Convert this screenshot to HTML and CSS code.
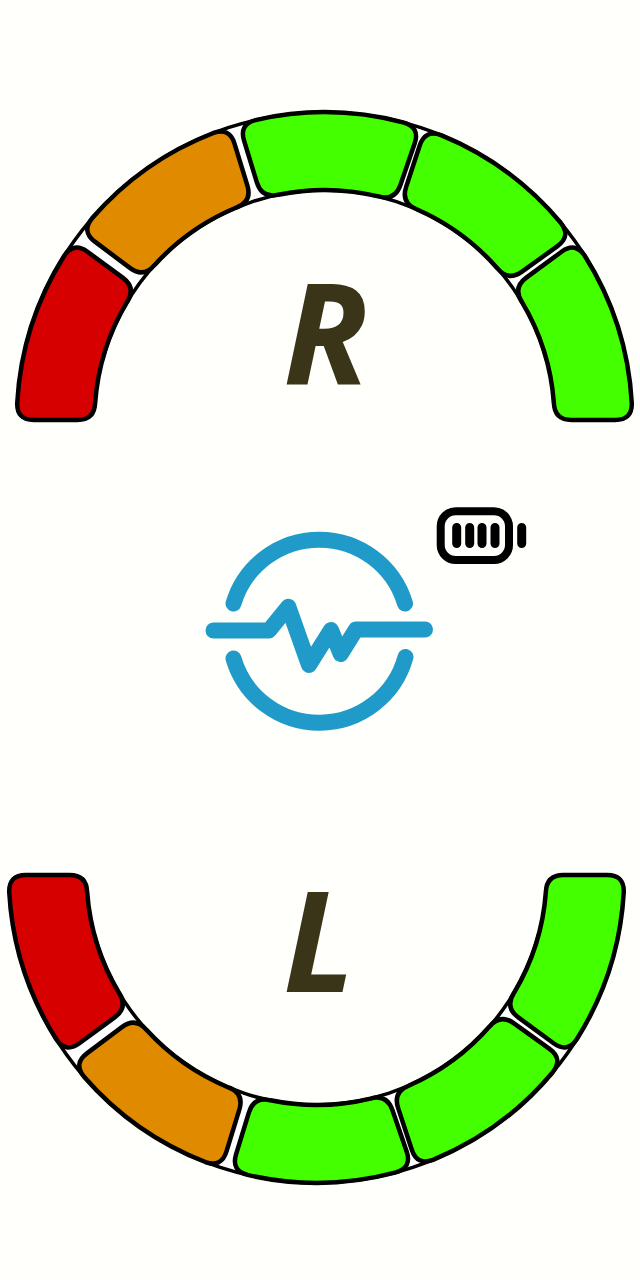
FILE: index.html
```html
<!DOCTYPE html>
<html lang="en">

<head>
    <meta charset="UTF-8">
    <meta name="viewport" content="width=device-width, initial-scale=1.0">
    <title>Insole pressure</title>
    <link rel="stylesheet" href="styles.css">
</head>

<body>
    <!-- Right foot -->
    <svg class="gauge gauge-right" viewBox="0 0 640 320" width="640" height="320">
        <defs>
            <!-- top segment, rotated for its neighbours -->
            <path id="seg-mid" d="M-74.19 -298.67 A307.75 307.75 0 0 1 74.19 -298.67 Q90.57 -294.11 85.32 -277.94 L71.79 -236.34 Q66.54 -220.17 50.09 -224.48 A230 230 0 0 0 -50.09 -224.48 Q-66.54 -220.17 -71.79 -236.34 L-85.32 -277.94 Q-90.57 -294.11 -74.19 -298.67 Z" />
            <!-- left end segment, flipped for the right end -->
            <path id="seg-end" d="M-290.75 0 Q-307.75 0 -307.28 -16.99 A307.75 307.75 0 0 1 -260.25 -164.26 Q-250.79 -178.33 -237.09 -168.27 L-201.83 -142.36 Q-188.13 -132.3 -197.39 -118.06 A230 230 0 0 0 -229.37 -16.98 Q-230 0 -247 0 Z" />
            <g id="gauge" class="segments">
                <path class="track" d="M-297.27 -79.65 A307.75 307.75 0 0 1 297.27 -79.65 L222.16 -59.53 A230 230 0 0 0 -222.16 -59.53 Z" />
                <use href="#seg-end" class="red" />
                <use href="#seg-mid" class="orange" transform="rotate(-35.1)" />
                <use href="#seg-mid" class="green" transform="rotate(1)" />
                <use href="#seg-mid" class="green" transform="rotate(36.2)" />
                <use href="#seg-end" class="green" transform="scale(-1 1)" />
            </g>
        </defs>
        <use href="#gauge" transform="translate(324.5 315)" />
        <text class="foot" x="283" y="279">R</text>
    </svg>

    <div class="status">
        <svg class="logo" viewBox="200 528 236 210" width="236" height="210">
            <path d="M233.5 603.5 A89.5 89.5 0 0 1 405 603.5" />
            <path d="M233.5 658.5 A89.4 89.4 0 0 0 405.5 657" />
            <path d="M213.5 630.5 H269 L288.3 606.7 L309 665 L331 630 L340.7 654 L356 629.5 H425" />
        </svg>
        <svg class="battery" viewBox="436 506 92 60" width="92" height="60">
            <rect class="battery-body" x="440.7" y="511.3" width="68.3" height="48.7" rx="15" />
            <path class="battery-bars" d="M456.7 527.5 V543.5 M469.7 527.5 V543.5 M482 527.5 V543.5 M495 527.5 V543.5 M521.7 527.5 V543.5" />
        </svg>
    </div>

    <!-- Left foot -->
    <svg class="gauge gauge-left" viewBox="0 0 640 350" width="640" height="350">
        <use href="#gauge" transform="translate(316.5 35) scale(1 -1)" />
        <text class="foot" x="283" y="152">L</text>
    </svg>
</body>

</html>
```

FILE: styles.css
```css
body {
    margin: 0;
    padding-top: 105px;
    background-color: #fffffb;
}

.gauge {
    display: block;
}

.gauge-left {
    margin-top: 102px;
}

.segments {
    stroke: #000;
    stroke-width: 4.5;
}

.track {
    fill: #fff;
    stroke-width: 3.5;
}

.red {
    fill: #d60000;
}

.orange {
    fill: #e08a00;
}

.green {
    fill: #44ff00;
}

.foot {
    fill: #3a3418;
    font-family: "Open Sans", sans-serif;
    font-size: 140px;
    font-style: italic;
    font-weight: 700;
}

.status {
    display: flex;
    align-items: flex-start;
    margin-top: 81px;
    padding-left: 200px;
}

.logo {
    margin-top: 22px;
    fill: none;
    stroke: #1f9ac9;
    stroke-width: 16;
    stroke-linecap: round;
    stroke-linejoin: round;
}

.battery {
    fill: none;
    stroke: #000;
}

.battery-body {
    stroke-width: 8;
}

.battery-bars {
    stroke-width: 9;
    stroke-linecap: round;
}
```
